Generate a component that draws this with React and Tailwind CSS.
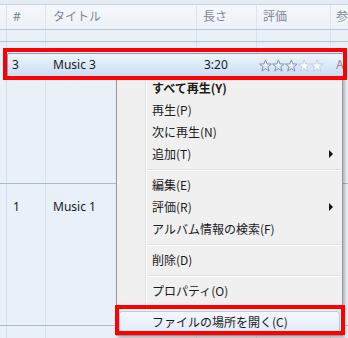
import React from 'react';

const STAR = 'M6.5 0.4 L8.03 4.4 L12.3 4.55 L8.95 7.2 L10.1 11.6 L6.5 9.1 L2.9 11.6 L4.05 7.2 L0.7 4.55 L4.97 4.4 Z';

function Stars({ value }) {
  return (
    <svg width="65" height="13" viewBox="0 0 65 13">
      <defs>
        <linearGradient id="starFill" x1="0" y1="0" x2="0" y2="1">
          <stop offset="0" stopColor="#ffffff" />
          <stop offset="1" stopColor="#d3dce8" />
        </linearGradient>
      </defs>
      {[0, 1, 2, 3, 4].map(i => (
        <path
          key={i}
          d={STAR}
          transform={`translate(${i * 12.9} 0.5)`}
          fill={i < value ? 'url(#starFill)' : '#f6f8fb'}
          stroke={i < value ? '#8393a9' : '#c6d0dc'}
          strokeWidth="1"
          strokeLinejoin="round"
        />
      ))}
    </svg>
  );
}

// empty grid row: just the column rules
function GridCells({ className = '' }) {
  return (
    <div className={`flex ${className}`}>
      <div className="w-[6px] shrink-0" />
      <div className="w-[39px] shrink-0 border-l border-[#d6e1ee]" />
      <div className="w-[151px] shrink-0 border-l border-[#d6e1ee]" />
      <div className="w-[60px] shrink-0 border-l border-[#d6e1ee]" />
      <div className="w-[74px] shrink-0 border-l border-[#d6e1ee]" />
      <div className="flex-1 min-w-0 border-l border-[#d6e1ee]" />
    </div>
  );
}

function MenuItem({ label, bold, arrow }) {
  return (
    <div className="flex h-[22px]">
      <div className="w-[29px] border-r border-[#e2e3e3]" />
      <div className="w-px bg-white" />
      <div className={`flex-1 flex items-center pl-[5px] pr-[9px] leading-[22px] ${bold ? 'font-bold' : ''}`}>
        <span className="flex-1">{label}</span>
        {arrow && (
          <div className="w-0 h-0 border-y-[4px] border-y-transparent border-l-[4px] border-l-[#111]" />
        )}
      </div>
    </div>
  );
}

function Separator() {
  return (
    <div className="flex h-[9px]">
      <div className="w-[29px] border-r border-[#e2e3e3]" />
      <div className="w-px bg-white" />
      <div className="flex-1 pt-[4px] mr-[1px]">
        <div className="h-px bg-[#e0e0e0]" />
        <div className="h-px bg-white" />
      </div>
    </div>
  );
}

export default function App() {
  return (
    <div className="relative w-[348px] h-[338px] overflow-hidden bg-[#eaf0f8] text-[12px] text-[#1a1a1a] font-['Noto_Sans','Noto_Sans_CJK_JP',sans-serif]">
      {/* top strip */}
      <div className="h-[5px] bg-[#e6ecf4] border-b border-[#c9d3e0]" />

      {/* column header */}
      <div className="flex h-[25px] border-b border-[#b9c6d6] bg-gradient-to-b from-[#f5f8fc] to-[#edf2f8] text-[#7d8896]">
        <div className="w-[6px] shrink-0" />
        <div className="w-[39px] shrink-0 border-l border-[#dce4ee] pl-[6px] flex items-center">#</div>
        <div className="w-[151px] shrink-0 border-l border-[#dce4ee] pl-[7px] flex items-center">タイトル</div>
        <div className="w-[60px] shrink-0 border-l border-[#dce4ee] pl-[6px] flex items-center">長さ</div>
        <div className="w-[74px] shrink-0 border-l border-[#dce4ee] pl-[6px] flex items-center">評価</div>
        <div className="flex-1 min-w-0 overflow-hidden border-l border-[#dce4ee] pl-[5px] flex items-center whitespace-nowrap">参加</div>
      </div>

      <GridCells className="h-[12px] border-b border-[#b4c2d5]" />

      {/* group 1 */}
      <div className="flex flex-col h-[142px] border-b border-[#a9b9cf]">
        <GridCells className="h-[11px]" />
        <div className="flex h-[24px] ml-[7px] mr-[4px] rounded-[2px] border border-[#7fa3cf] bg-gradient-to-b from-[#eef5fe] to-[#cbdcf3] leading-[22px]">
          <div className="w-[38px] shrink-0 pl-[4px]">3</div>
          <div className="w-[151px] shrink-0 pl-[7px]">Music 3</div>
          <div className="w-[60px] shrink-0 pl-[7px]">3:20</div>
          <div className="w-[74px] shrink-0 pl-[2px] flex items-center">
            <Stars value={3} />
          </div>
          <div className="flex-1 min-w-0 pl-[5px] overflow-hidden text-[#8a8a8a]">A</div>
        </div>
        <GridCells className="flex-1" />
      </div>

      {/* group 2 */}
      <div className="flex h-[142px] border-b border-[#a9b9cf] leading-[22px]">
        <div className="w-[6px] shrink-0" />
        <div className="w-[39px] shrink-0 border-l border-[#d6e1ee] pl-[6px] pt-[12px]">1</div>
        <div className="w-[151px] shrink-0 border-l border-[#d6e1ee] pl-[7px] pt-[12px]">Music 1</div>
        <div className="w-[60px] shrink-0 border-l border-[#d6e1ee]" />
        <div className="w-[74px] shrink-0 border-l border-[#d6e1ee]" />
        <div className="flex-1 min-w-0 border-l border-[#d6e1ee]" />
      </div>

      <GridCells className="h-[12px]" />

      {/* context menu */}
      <div className="absolute left-[116px] top-[76px] w-[227px] border border-[#979797] bg-[#f0f0f0] pb-[2px] shadow-[2px_2px_3px_rgba(0,0,0,0.25)] font-['Noto_Sans_CJK_JP',sans-serif]">
        <MenuItem label="すべて再生(Y)" bold />
        <MenuItem label="再生(P)" />
        <MenuItem label="次に再生(N)" />
        <MenuItem label="追加(T)" arrow />
        <Separator />
        <MenuItem label="編集(E)" />
        <MenuItem label="評価(R)" arrow />
        <MenuItem label="アルバム情報の検索(F)" />
        <Separator />
        <MenuItem label="削除(D)" />
        <Separator />
        <MenuItem label="プロパティ(O)" />
        <Separator />
        <div className="h-[22px] mx-[2px] rounded-[3px] border border-[#b4cbe8] bg-gradient-to-b from-[#f4f8fd] to-[#e2ebf7] pl-[32px] leading-[20px]">
          ファイルの場所を開く(C)
        </div>
      </div>

      {/* red annotation boxes */}
      <div className="absolute left-[3px] top-[48px] w-[344px] h-[32px] border-4 border-[#ff0000]" />
      <div className="absolute left-[115px] top-[305px] w-[230px] h-[30px] border-4 border-[#ff0000]" />
    </div>
  );
}
